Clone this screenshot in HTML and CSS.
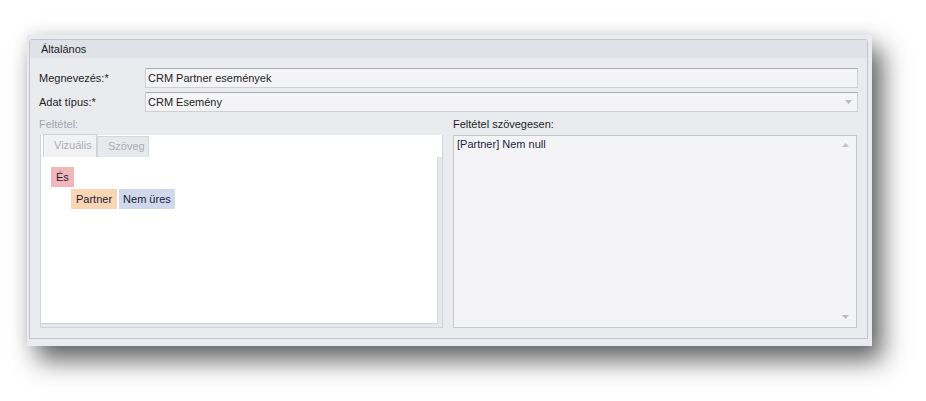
FILE: index.html
```html
<!DOCTYPE html>
<html lang="hu">
<head>
<meta charset="utf-8">
<title>Általános</title>
<link rel="stylesheet" href="styles.css">
</head>
<body>
<div class="window">
  <div class="group">
    <div class="group-head">Általános</div>
    <div class="group-body">
      <div class="row">
        <div class="label">Megnevezés:*</div>
        <div class="input">CRM Partner események</div>
      </div>
      <div class="row">
        <div class="label">Adat típus:*</div>
        <div class="input select">
          <span>CRM Esemény</span>
          <svg class="arrow" width="7" height="4" viewBox="0 0 7 4"><path d="M0 0H7L3.5 4Z" fill="#b9bac1"/></svg>
        </div>
      </div>
      <div class="cols">
        <div class="col">
          <div class="caption disabled">Feltétel:</div>
          <div class="tabs">
            <div class="tabstrip">
              <div class="tab active">Vizuális</div>
              <div class="tab">Szöveg</div>
            </div>
            <div class="page">
              <div class="chips">
                <span class="chip and">És</span>
              </div>
              <div class="chips indent">
                <span class="chip field">Partner</span>
                <span class="chip op">Nem üres</span>
              </div>
            </div>
          </div>
        </div>
        <div class="col">
          <div class="caption">Feltétel szövegesen:</div>
          <div class="memo">
            <span class="memo-text">[Partner] Nem null</span>
            <div class="scroll">
              <svg width="7" height="4" viewBox="0 0 7 4"><path d="M3.5 0L7 4H0Z" fill="#c3c4ca"/></svg>
              <svg width="7" height="4" viewBox="0 0 7 4"><path d="M0 0H7L3.5 4Z" fill="#b9bac1"/></svg>
            </div>
          </div>
        </div>
      </div>
    </div>
  </div>
</div>
</body>
</html>
```

FILE: styles.css
```css
* { box-sizing: border-box; }
html, body { margin: 0; padding: 0; background: #ffffff; }
html { height: 100%; }
body {
  min-height: 401px;
  height: 100%;
  font-family: "Liberation Sans", Arial, sans-serif;
  font-size: 11px;
  color: #1e1e1e;
  padding: 35px 0 0 27px;
}
.window {
  width: 845px;
  height: 311px;
  background: #eaebef;
  padding: 4px 4px 7px 2px;
  box-shadow: 10px 14px 24px rgba(0, 0, 0, 0.62), 0 -3px 14px rgba(0, 0, 0, 0.07);
}
.group {
  height: 300px;
  border: 1px solid #c3c5cc;
  border-radius: 3px 3px 0 0;
  display: flex;
  flex-direction: column;
}
.group-head {
  height: 18px;
  line-height: 18px;
  padding-left: 11px;
  background: #e1e2e7;
  color: #1e1e1e;
}
.group-body {
  flex: 1;
  padding: 10px 9px 0 9px;
  display: flex;
  flex-direction: column;
}
.row {
  display: flex;
  align-items: center;
  height: 20px;
  margin-bottom: 4px;
}
.label { width: 106px; }
.input {
  flex: 1;
  height: 20px;
  line-height: 18px;
  padding-left: 2px;
  background: #f4f4f6;
  border: 1px solid #cfd0d6;
  border-top-color: #a9abb4;
  color: #1e1e1e;
}
.select {
  display: flex;
  align-items: center;
  justify-content: space-between;
  padding-right: 5px;
}
.cols {
  display: flex;
  gap: 10px;
  margin-left: 1px;
}
.col { display: flex; flex-direction: column; }
.col:first-child { width: 403px; }
.col:last-child { width: 404px; }
.caption {
  height: 19px;
  line-height: 16px;
  color: #1e1e1e;
}
.col:first-child .caption { margin-left: -1px; }
.disabled { color: #a3a5ad; }
.tabs {
  height: 193px;
  border: 1px solid #d3d4d9;
  background: #e7e8ec;
  display: flex;
  flex-direction: column;
}
.tabstrip {
  height: 22px;
  margin-top: -1px;
  background: #ffffff;
  display: flex;
  align-items: flex-end;
  padding-left: 2px;
}
.tab {
  height: 21px;
  line-height: 19px;
  padding: 0 10px;
  color: #abadb5;
  background: #e8e9ec;
  border: 1px solid #d5d6db;
  border-bottom: none;
}
.tab.active {
  height: 23px;
  line-height: 21px;
  width: 54px;
  background: #f2f2f4;
  border-color: #d0d1d6;
}
.tab:not(.active) { width: 52px; }
.page {
  flex: 1;
  background: #ffffff;
  margin: 0 4px 3px 0;
  border-right: 1px solid #d8d9de;
  border-bottom: 1px solid #cdced4;
  padding: 10px 0 0 10px;
}
.chips { display: flex; gap: 2px; margin-bottom: 2px; }
.indent { padding-left: 20px; }
.chip {
  height: 20px;
  line-height: 20px;
  padding: 0 5px;
  color: #1a1a3c;
}
.and { background: #f2b8b9; }
.field { background: #f8d6b3; }
.op { background: #d0d9eb; padding: 0 4px; }
.memo {
  height: 193px;
  background: #f4f4f6;
  border: 1px solid #c7c8ce;
  display: flex;
  justify-content: space-between;
  padding: 2px 7px 8px 3px;
  color: #1e1e3e;
}
.scroll {
  display: flex;
  flex-direction: column;
  justify-content: space-between;
  padding-top: 5px;
}
```
